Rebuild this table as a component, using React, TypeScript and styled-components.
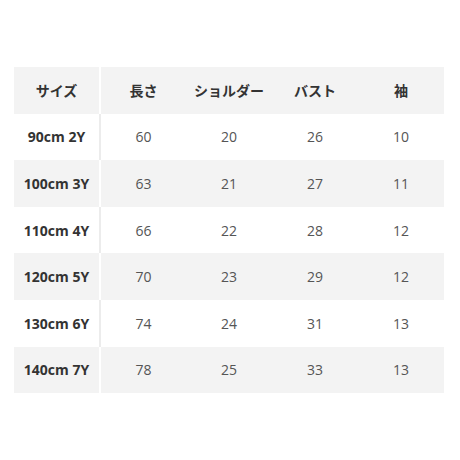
import React from "react";
import styled, { createGlobalStyle } from "styled-components";

const Global = createGlobalStyle`
  html, body { margin: 0; padding: 0; background: #ffffff; }
  body { font-family: "Open Sans", "Noto Sans CJK JP", sans-serif; }
`;

const Page = styled.div`
  width: 460px;
  height: 460px;
  padding: 67px 0 0 14px;
  box-sizing: border-box;
`;

const Table = styled.table`
  width: 431px;
  border-collapse: collapse;
  table-layout: fixed;
`;

const Row = styled.tr<{ $shade: boolean }>`
  height: 46.6px;
  background: ${(p) => (p.$shade ? "#f3f3f3" : "#ffffff")};
`;

const HeadCell = styled.th<{ $first?: boolean; $shade: boolean }>`
  padding: 0;
  font-size: 14px;
  font-weight: 700;
  color: #333333;
  text-align: center;
  vertical-align: middle;
  border-right: ${(p) => (p.$first ? `2px solid ${p.$shade ? "#ffffff" : "#ececec"}` : "none")};
`;

const Cell = styled.td<{ $first?: boolean; $shade: boolean }>`
  padding: 0;
  font-size: 14px;
  font-weight: ${(p) => (p.$first ? 700 : 400)};
  color: ${(p) => (p.$first ? "#333333" : "#555555")};
  text-align: center;
  vertical-align: middle;
  border-right: ${(p) => (p.$first ? `2px solid ${p.$shade ? "#ffffff" : "#ececec"}` : "none")};
`;

const headers = ["サイズ", "長さ", "ショルダー", "バスト", "袖"];
const rows: string[][] = [
  ["90cm 2Y", "60", "20", "26", "10"],
  ["100cm 3Y", "63", "21", "27", "11"],
  ["110cm 4Y", "66", "22", "28", "12"],
  ["120cm 5Y", "70", "23", "29", "12"],
  ["130cm 6Y", "74", "24", "31", "13"],
  ["140cm 7Y", "78", "25", "33", "13"],
];

export default function App() {
  return (
    <>
      <Global />
      <Page>
        <Table>
          <thead>
            <Row $shade>
              {headers.map((h, i) => (
                <HeadCell key={h} $first={i === 0} $shade>
                  {h}
                </HeadCell>
              ))}
            </Row>
          </thead>
          <tbody>
            {rows.map((r, ri) => {
              const shade = ri % 2 === 1;
              return (
                <Row key={r[0]} $shade={shade}>
                  {r.map((c, ci) => (
                    <Cell key={ci} $first={ci === 0} $shade={shade}>
                      {c}
                    </Cell>
                  ))}
                </Row>
              );
            })}
          </tbody>
        </Table>
      </Page>
    </>
  );
}
